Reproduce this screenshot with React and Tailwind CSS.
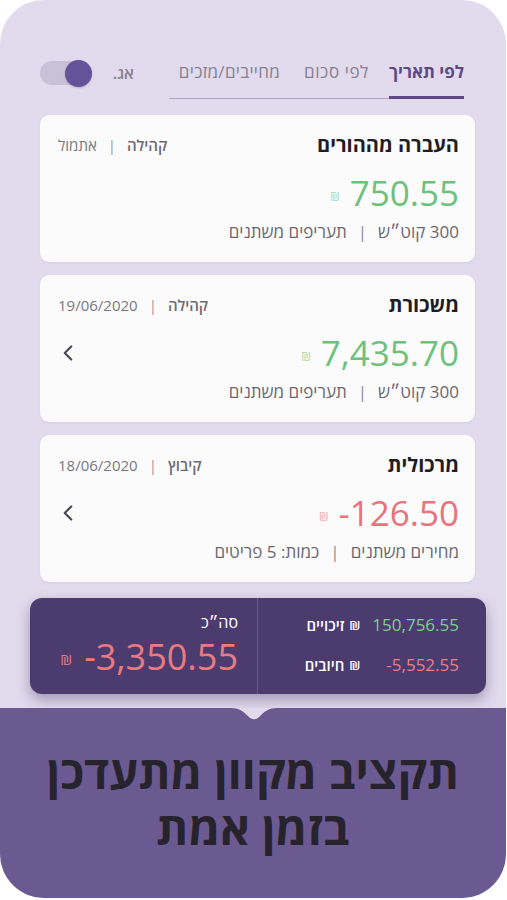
import { ChevronLeft } from 'lucide-react';

const font = { fontFamily: '"Open Sans", "Liberation Sans", sans-serif' };

const cards = [
  {
    title: 'העברה מההורים',
    tag: 'קהילה',
    when: 'אתמול',
    amount: '750.55',
    positive: true,
    details: ['300 קוט״ש', 'תעריפים משתנים'],
    arrow: false,
  },
  {
    title: 'משכורת',
    tag: 'קהילה',
    when: '19/06/2020',
    amount: '7,435.70',
    positive: true,
    details: ['300 קוט״ש', 'תעריפים משתנים'],
    arrow: true,
  },
  {
    title: 'מרכולית',
    tag: 'קיבוץ',
    when: '18/06/2020',
    amount: '-126.50',
    positive: false,
    details: ['מחירים משתנים', 'כמות: 5 פריטים'],
    arrow: true,
  },
];

function Card({ c }) {
  return (
    <div className="h-[147px] rounded-[9px] bg-[#fbfbfc] pt-[19px] pr-[16px] pl-[18px] shadow-[0_1px_3px_rgba(80,60,120,0.08)]">
      <div className="flex items-center justify-between h-[22px]">
        <div className="text-[20px] font-bold text-[#1f1d24] leading-[22px]">{c.title}</div>
        <div className="flex items-center gap-[11px] text-[15px] text-[#7a7780] leading-[22px]">
          <span className="font-semibold text-[#6d6a73]">{c.tag}</span>
          <span className="text-[#9a97a0]">|</span>
          <span>{c.when}</span>
        </div>
      </div>
      <div className="mt-[17px] flex items-center justify-between h-[40px]">
        <div className="flex items-center gap-[10px]">
          <span className={`text-[35px] leading-[40px] ${c.positive ? 'text-[#6cc27b]' : 'text-[#e8737a]'}`}>
            <bdi>{c.amount}</bdi>
          </span>
          <span className={`text-[12px] mt-[8px] ${c.positive ? 'text-[#a9d9b1]' : 'text-[#f0aab0]'}`}>₪</span>
        </div>
        {c.arrow && <ChevronLeft size={26} strokeWidth={2} className="text-[#4a4750] -ml-[3px]" />}
      </div>
      <div className="mt-[8px] flex items-center gap-[11px] text-[17px] leading-[22px] text-[#6a6770]">
        <span>{c.details[0]}</span>
        <span className="text-[#8f8c95]">|</span>
        <span>{c.details[1]}</span>
      </div>
    </div>
  );
}

export default function App() {
  return (
    <div className="w-[507px] h-[900px] bg-white overflow-hidden" style={font}>
      <div dir="rtl" className="w-[506px] h-[898px] rounded-[44px] overflow-hidden bg-[#e2dbee] flex flex-col">
        {/* tabs */}
        <div className="mt-[61px] flex items-start pr-[42px]">
          <div className="w-[295px] flex border-b border-[#b0a8c2] text-[17px] leading-[22px]">
            <div className="pb-[13px] border-b-[3px] border-[#5b4a86] -mb-px font-bold text-[#5b4a86]">לפי תאריך</div>
            <div className="mr-[20px] pb-[14px] text-[#86818f] tracking-[0.6px]">לפי סכום</div>
            <div className="mr-[24px] pb-[14px] text-[#86818f] tracking-[0.3px]">מחייבים/מזכים</div>
          </div>
          <div className="mr-[35px] h-[24px] flex items-center text-[16px] font-semibold text-[#86818f]">אג.</div>
          <div className="mr-[21px] h-[24px] flex items-center">
            <div className="w-[52px] h-[24px] rounded-full bg-[#c9c2d7] flex items-center">
              <div className="w-[27px] h-[27px] rounded-full bg-[#64539a] shadow-[0_1px_2px_rgba(0,0,0,0.2)]" />
            </div>
          </div>
        </div>

        {/* cards */}
        <div className="mt-[16px] ml-[40px] mr-[31px] flex flex-col gap-[13px]">
          {cards.map((c) => (
            <Card key={c.title} c={c} />
          ))}
        </div>

        {/* summary */}
        <div className="mt-[16px] ml-[30px] mr-[20px] h-[96px] rounded-[12px] bg-[#4b3b6e] flex shadow-[0_6px_14px_rgba(40,25,70,0.35)]">
          <div className="w-[229px] border-l border-[#66568b] pr-[27px] pt-[16px]">
            <div className="grid grid-cols-[auto_auto] gap-x-[12px] gap-y-[18px] justify-start items-center text-[17px] leading-[22px]">
              <bdi className="text-right text-[#7fd08c] font-medium">150,756.55</bdi>
              <div className="flex items-center gap-[5px] text-white font-semibold text-[15px]">
                <span className="text-[13px]">₪</span>
                <span>זיכויים</span>
              </div>
              <bdi className="text-right text-[#ec7f86] font-medium">-5,552.55</bdi>
              <div className="flex items-center gap-[5px] text-white font-semibold text-[15px]">
                <span className="text-[13px]">₪</span>
                <span>חיובים</span>
              </div>
            </div>
          </div>
          <div className="flex-1 pr-[19px] pt-[13px]">
            <div className="text-[16px] leading-[22px] text-white">סה״כ</div>
            <div className="flex items-center gap-[12px] mt-[5px]">
              <bdi className="text-[36px] leading-[38px] text-[#e87a80]">-3,350.55</bdi>
              <span className="text-[15px] mt-[4px] text-[#e87a80]">₪</span>
            </div>
          </div>
        </div>

        {/* banner */}
        <div className="relative mt-[14px] h-[191px] bg-[#6b5a92] flex flex-col items-center justify-center pb-[8px]">
          <svg className="absolute top-0 left-[231px]" width="46" height="13" viewBox="0 0 46 13">
            <path d="M0 0 H46 C38 0 34 3 28 9 C25 12 21 12 18 9 C12 3 8 0 0 0 Z" fill="#e2dbee" />
          </svg>
          <div className="text-[46px] leading-[56px] font-bold text-[#27232d] text-center">
            <div>תקציב מקוון מתעדכן</div>
            <div>בזמן אמת</div>
          </div>
        </div>
      </div>
    </div>
  );
}
